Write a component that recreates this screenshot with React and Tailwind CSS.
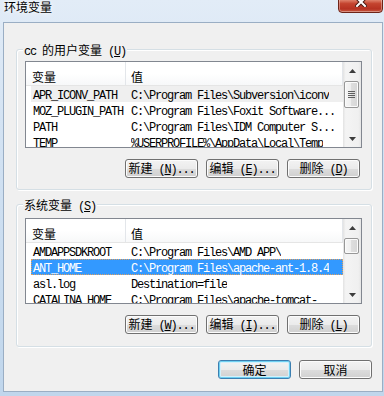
import React from "react";

function C({ children }) {
  return (
    <span className="font-['Noto_Sans_CJK_SC',sans-serif] text-[12px] tracking-normal">
      {children}
    </span>
  );
}

function M({ children }) {
  return (
    <span className="font-['Liberation_Mono',monospace] text-[12px] tracking-[-1.2px]">
      {children}
    </span>
  );
}

function Up() {
  return (
    <svg width="7" height="4" viewBox="0 0 7 4">
      <path d="M3.5 0 L7 4 L0 4 Z" fill="#3c3c3c" />
    </svg>
  );
}

function Down() {
  return (
    <svg width="7" height="4" viewBox="0 0 7 4">
      <path d="M0 0 L7 0 L3.5 4 Z" fill="#3c3c3c" />
    </svg>
  );
}

function ScrollBar({ thumbClass, grip }) {
  return (
    <div className="w-[18px] shrink-0 flex flex-col bg-[linear-gradient(90deg,#e2e2e2,#f4f4f4_15%,#f0f0f0_85%,#e6e6e6)]">
      <div className="h-[17px] shrink-0 flex items-center justify-center">
        <Up />
      </div>
      <div className="flex-1">
        <div
          className={
            "mt-[2px] ml-[1px] mr-[2px] rounded-[2px] border border-[#979797] bg-[linear-gradient(90deg,#f6f6f6,#ededed_50%,#dedede_50%,#d6d6d6)] shadow-[inset_0_0_0_1px_#fbfbfb] flex flex-col items-center justify-center gap-[1px] " +
            thumbClass
          }
        >
          {grip && (
            <>
              <div className="w-[7px] h-[1px] bg-[#5e5e5e]" />
              <div className="w-[7px] h-[1px] bg-[#5e5e5e]" />
              <div className="w-[7px] h-[1px] bg-[#5e5e5e]" />
              <div className="w-[7px] h-[1px] bg-[#5e5e5e]" />
            </>
          )}
        </div>
      </div>
      <div className="h-[17px] shrink-0 flex items-center justify-center">
        <Down />
      </div>
    </div>
  );
}

function Row({ name, value, state }) {
  const cls =
    state === "sel"
      ? "bg-[#3399ff] text-white border border-dotted border-[#e0a060]"
      : state === "inactive"
      ? "bg-[#efefef] text-black border border-transparent"
      : "text-black border border-transparent";
  return (
    <div className={"flex h-[16px] items-center ml-[5px] leading-[14px] " + cls}>
      <div className="w-[99px] shrink-0 pl-[1px] whitespace-nowrap overflow-hidden">
        <M>{name}</M>
      </div>
      <div className="whitespace-nowrap overflow-hidden">
        <M>{value}</M>
      </div>
    </div>
  );
}

function List({ rows, boxClass, thumbClass, grip }) {
  return (
    <div
      className={
        "ml-[8px] w-[337px] border border-[#828790] bg-white flex overflow-hidden " +
        boxClass
      }
    >
      <div className="flex-1 min-w-0 overflow-hidden">
        <div className="flex h-[24px] border-b border-[#e5e5e5] bg-[linear-gradient(#ffffff,#ffffff_50%,#f7f8f9)] leading-[12px]">
          <div className="w-[100px] shrink-0 border-r border-[#e3e6ea] pl-[6px] pt-[8px]">
            <C>变量</C>
          </div>
          <div className="flex-1 pl-[5px] pt-[8px] border-r border-[#e3e6ea]">
            <C>值</C>
          </div>
        </div>
        {rows.map((r) => (
          <Row key={r.name} {...r} />
        ))}
      </div>
      <ScrollBar thumbClass={thumbClass} grip={grip} />
    </div>
  );
}

function Btn({ cjk, acc, dots, def }) {
  return (
    <div
      className={
        "w-[73px] h-[19px] rounded-[3px] border flex items-center justify-center leading-[12px] bg-[linear-gradient(#f3f3f3_0%,#ebebeb_50%,#dddddd_50%,#d0d0d0_100%)] " +
        (def
          ? "border-[#3c7fb1] shadow-[inset_0_0_0_1px_#6fd0f1,inset_0_0_0_2px_#d3f0fb]"
          : "border-[#707070] shadow-[inset_0_0_0_1px_#fcfcfc]")
      }
    >
      <span className="whitespace-pre">
        <C>{cjk}</C>
        {acc && (
          <M>
            {" ("}
            <span className="underline">{acc}</span>
            {")" + (dots ? "..." : "")}
          </M>
        )}
      </span>
    </div>
  );
}

function Label({ cjkPre, cjk, acc }) {
  return (
    <div className="-mt-[7px] ml-[6px] px-[1px] w-fit h-[12px] leading-[12px] bg-[#f0f0f0] whitespace-pre">
      {cjkPre && <M>{cjkPre}</M>}
      <C>{cjk}</C>
      <M>
        {" ("}
        <span className="underline">{acc}</span>
        {")"}
      </M>
    </div>
  );
}

export default function App() {
  const userRows = [
    { name: "APR_ICONV_PATH", value: "C:\\Program Files\\Subversion\\iconv", state: "inactive" },
    { name: "MOZ_PLUGIN_PATH", value: "C:\\Program Files\\Foxit Software..." },
    { name: "PATH", value: "C:\\Program Files\\IDM Computer S..." },
    { name: "TEMP", value: "%USERPROFILE%\\AppData\\Local\\Temp" },
  ];
  const sysRows = [
    { name: "AMDAPPSDKROOT", value: "C:\\Program Files\\AMD APP\\" },
    { name: "ANT_HOME", value: "C:\\Program Files\\apache-ant-1.8.4", state: "sel" },
    { name: "asl.log", value: "Destination=file" },
    { name: "CATALINA_HOME", value: "C:\\Program Files\\apache-tomcat-" },
  ];

  return (
    <div className="w-[384px] h-[396px] overflow-hidden bg-[linear-gradient(180deg,#e2ecf7_0%,#d4e3f3_30%,#c0d6ec_100%)] text-black flex flex-col">
      <div className="h-[22px] shrink-0 flex justify-between items-start">
        <div className="pl-[4px] leading-[12px] [text-shadow:0_0_6px_#fff,0_0_3px_#fff]">
          <C>环境变量</C>
        </div>
        <div className="-mt-[10px] mr-[1px] w-[45px] h-[23px] rounded-[4px] border border-[#6e2418] bg-[linear-gradient(#eaa08e_0%,#dc7a64_45%,#c4442f_60%,#b63222_85%,#c85a42_100%)] shadow-[inset_0_0_0_1px_rgba(255,255,255,0.35)] flex items-center justify-center">
          <svg width="12" height="10" viewBox="0 0 12 10">
            <path d="M2 1 L10 9 M10 1 L2 9" stroke="#4a1a12" strokeWidth="4" strokeLinecap="square" />
            <path d="M2 1 L10 9 M10 1 L2 9" stroke="#ffffff" strokeWidth="2" strokeLinecap="square" />
          </svg>
        </div>
      </div>

      <div className="ml-[3px] w-[380px] h-[370px] shrink-0 border border-[#9aaec4] bg-[#f0f0f0] flex flex-col">
        {/* user variables */}
        <div className="ml-[12px] w-[356px] mt-[26px] border border-[#d5dfe5] rounded-[3px] shadow-[inset_1px_1px_0_#fff,1px_1px_0_#fff]">
          <Label cjkPre="cc " cjk="的用户变量" acc="U" />
          <div className="mt-[6px]">
            <List rows={userRows} boxClass="h-[87px]" thumbClass="h-[27px]" grip />
          </div>
          <div className="mt-[11px] mb-[11px] ml-[8px] w-[337px] pr-[2px] flex justify-end gap-[8px]">
            <Btn cjk="新建" acc="N" dots />
            <Btn cjk="编辑" acc="E" dots />
            <Btn cjk="删除" acc="D" />
          </div>
        </div>

        {/* system variables */}
        <div className="ml-[12px] w-[356px] mt-[14px] border border-[#d5dfe5] rounded-[3px] shadow-[inset_1px_1px_0_#fff,1px_1px_0_#fff]">
          <Label cjk="系统变量" acc="S" />
          <div className="mt-[8px]">
            <List rows={sysRows} boxClass="h-[86px]" thumbClass="h-[16px]" />
          </div>
          <div className="mt-[11px] mb-[12px] ml-[8px] w-[337px] pr-[2px] flex justify-end gap-[8px]">
            <Btn cjk="新建" acc="W" dots />
            <Btn cjk="编辑" acc="I" dots />
            <Btn cjk="删除" acc="L" />
          </div>
        </div>

        <div className="mt-[13px] ml-[12px] w-[356px] flex justify-end gap-[8px]">
          <Btn cjk="确定" def />
          <Btn cjk="取消" />
        </div>
      </div>
    </div>
  );
}
